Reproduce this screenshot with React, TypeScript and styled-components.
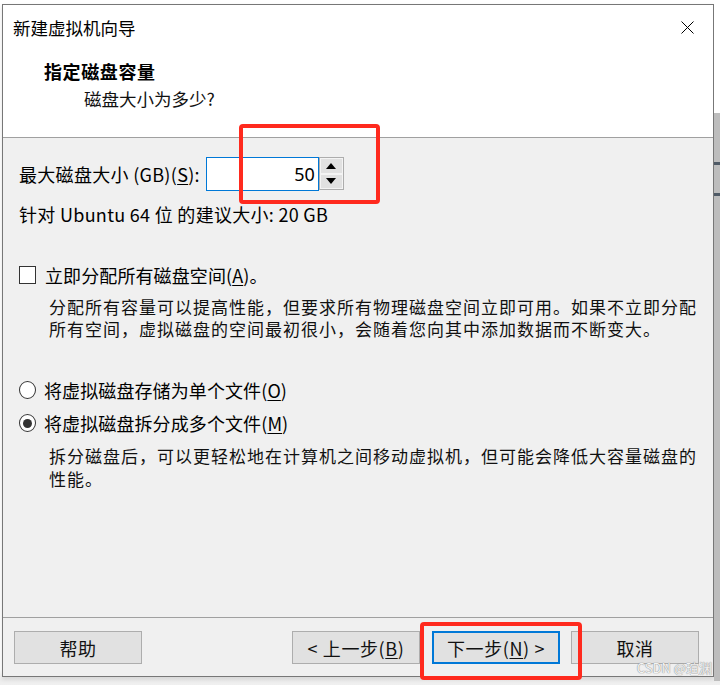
import React from "react";
import styled, { createGlobalStyle } from "styled-components";

const Global = createGlobalStyle`
  html, body { margin: 0; padding: 0; background: #ffffff; }
  body { font-family: "Noto Sans CJK SC", "Noto Sans", sans-serif; color: #000; }
  * { box-sizing: border-box; }
`;

const Page = styled.div`
  position: relative;
  width: 720px;
  height: 685px;
  display: flex;
  align-items: flex-start;
  padding: 4px 0 0 2px;
  background: linear-gradient(to bottom, #ffffff 0, #ffffff 670px, #ececec 680px, #f0f0f0 685px);
  overflow: hidden;
`;

const Dialog = styled.div`
  width: 712px;
  height: 673px;
  border: 1px solid #777777;
  display: flex;
  flex-direction: column;
  background: #f0f0f0;
  box-shadow: 0 2px 4px rgba(0, 0, 0, 0.12);
  font-size: 18px;
`;

const RightStrip = styled.div`
  width: 6px;
  height: 681px;
  margin-top: -4px;
  display: flex;
  flex-direction: column;
`;

const StripWhite = styled.div`
  height: 113px;
  background: #ffffff;
`;

const StripGray = styled.div`
  flex: 1;
  background: #bdbdbd;
  display: flex;
  flex-direction: column;
`;

const StripBar = styled.div<{ $top: number }>`
  height: 3px;
  margin-top: ${(p) => p.$top}px;
  background: #4f5a66;
`;

const TitleBar = styled.div`
  height: 44px;
  background: #ffffff;
  display: flex;
  align-items: center;
  justify-content: space-between;
  padding: 0 19px 0 10px;
  font-size: 17.5px;
`;

const CloseIcon = styled.svg`
  width: 13px;
  height: 13px;
`;

const Header = styled.div`
  height: 88px;
  background: #ffffff;
  padding: 10px 0 0 41px;
  display: flex;
  flex-direction: column;
`;

const HeaderTitle = styled.div`
  font-size: 18px;
  line-height: 24px;
  font-weight: 700;
  letter-spacing: 0.6px;
`;

const HeaderSub = styled.div`
  font-size: 17.5px;
  line-height: 24px;
  margin: 4px 0 0 40px;
  color: #111;
`;

const Separator = styled.div`
  height: 1px;
  background: #a0a0a0;
`;

const Body = styled.div`
  flex: 1;
  padding: 19px 16px 0 16px;
  display: flex;
  flex-direction: column;
`;

const SizeRow = styled.div`
  display: flex;
  align-items: center;
  height: 34px;
`;

const Label = styled.span`
  font-size: 18px;
  line-height: 24px;
  letter-spacing: 0.3px;
  margin-right: 6px;
`;

const U = styled.span`
  text-decoration: underline;
  text-underline-offset: 2px;
`;

const Spin = styled.div`
  display: flex;
  height: 34px;
`;

const SpinInput = styled.div`
  width: 113px;
  height: 34px;
  border: 1px solid #0078d7;
  background: #ffffff;
  display: flex;
  align-items: center;
  justify-content: flex-end;
  padding-right: 3px;
  font-size: 18px;
  font-family: "Noto Sans", sans-serif;
`;

const SpinButtons = styled.div`
  width: 25px;
  height: 33px;
  display: flex;
  flex-direction: column;
  border: 1px solid #adadad;
  background: #ffffff;
`;

const SpinBtn = styled.div`
  flex: 1;
  background: #e1e1e1;
  border: 1px solid #f4f4f4;
  display: flex;
  align-items: center;
  justify-content: center;
`;

const Arrow = styled.svg`
  width: 10px;
  height: 6px;
`;

const InfoLine = styled.div`
  margin-top: 11px;
  font-size: 18px;
  line-height: 24px;
  letter-spacing: 0.3px;
`;

const OptionRow = styled.div<{ $mt: number }>`
  display: flex;
  align-items: center;
  height: 24px;
  margin-top: ${(p) => p.$mt}px;
  font-size: 18px;
  letter-spacing: 0.1px;
`;

const CheckBox = styled.div`
  width: 17px;
  height: 18px;
  border: 1px solid #333333;
  background: #ffffff;
  margin-right: 9px;
`;

const Radio = styled.div<{ $on?: boolean }>`
  width: 17px;
  height: 18px;
  border-radius: 50%;
  border: 1px solid #333333;
  background: #ffffff;
  margin-right: 8px;
  display: flex;
  align-items: center;
  justify-content: center;
  &::after {
    content: "";
    display: ${(p) => (p.$on ? "block" : "none")};
    width: 9px;
    height: 9px;
    border-radius: 50%;
    background: #333333;
  }
`;

const Desc = styled.div<{ $lh: number }>`
  margin: 9px 0 0 30px;
  font-size: 17px;
  line-height: ${(p) => p.$lh}px;
  letter-spacing: 1px;
  color: #111;
`;

const Footer = styled.div`
  height: 58px;
  display: flex;
  align-items: flex-start;
  padding: 13px 13px 0 11px;
`;

const Button = styled.div<{ $primary?: boolean; $ml?: number }>`
  width: 128px;
  height: 33px;
  margin-left: ${(p) => p.$ml ?? 0}px;
  background: #e1e1e1;
  border: ${(p) => (p.$primary ? "2px solid #0078d7" : "1px solid #adadad")};
  display: flex;
  align-items: center;
  justify-content: center;
  font-size: 18px;
  letter-spacing: 0.6px;
  color: #111;
`;

const RedBox = styled.div<{ $x: number; $y: number; $w: number; $h: number }>`
  position: absolute;
  left: ${(p) => p.$x}px;
  top: ${(p) => p.$y}px;
  width: ${(p) => p.$w}px;
  height: ${(p) => p.$h}px;
  border: 4px solid #ff2a1e;
  border-radius: 4px;
  pointer-events: none;
`;

const Watermark = styled.div`
  position: absolute;
  right: 8px;
  bottom: 8px;
  font-size: 13px;
  color: rgba(255, 255, 255, 0.92);
  text-shadow: 0 0 1px #8a8a8a, 0 0 1px #8a8a8a;
  font-family: "Noto Sans CJK SC", sans-serif;
`;

export default function App() {
  return (
    <>
      <Global />
      <Page>
        <Dialog>
          <TitleBar>
            <span>新建虚拟机向导</span>
            <CloseIcon viewBox="0 0 13 13">
              <path d="M0.5 0.5 L12.5 12.5 M12.5 0.5 L0.5 12.5" stroke="#000" strokeWidth="1" fill="none" />
            </CloseIcon>
          </TitleBar>
          <Header>
            <HeaderTitle>指定磁盘容量</HeaderTitle>
            <HeaderSub>磁盘大小为多少?</HeaderSub>
          </Header>
          <Separator />
          <Body>
            <SizeRow>
              <Label>
                最大磁盘大小 (GB)(<U>S</U>):
              </Label>
              <Spin>
                <SpinInput>50</SpinInput>
                <SpinButtons>
                  <SpinBtn>
                    <Arrow viewBox="0 0 10 6">
                      <path d="M5 0 L10 6 L0 6 Z" fill="#000" />
                    </Arrow>
                  </SpinBtn>
                  <SpinBtn>
                    <Arrow viewBox="0 0 10 6">
                      <path d="M0 0 L10 0 L5 6 Z" fill="#000" />
                    </Arrow>
                  </SpinBtn>
                </SpinButtons>
              </Spin>
            </SizeRow>
            <InfoLine>针对 Ubuntu 64 位 的建议大小: 20 GB</InfoLine>
            <OptionRow $mt={37}>
              <CheckBox />
              <span>
                立即分配所有磁盘空间(<U>A</U>)。
              </span>
            </OptionRow>
            <Desc $lh={22}>
              分配所有容量可以提高性能，但要求所有物理磁盘空间立即可用。如果不立即分配
              <br />
              所有空间，虚拟磁盘的空间最初很小，会随着您向其中添加数据而不断变大。
            </Desc>
            <OptionRow $mt={38}>
              <Radio />
              <span>
                将虚拟磁盘存储为单个文件(<U>O</U>)
              </span>
            </OptionRow>
            <OptionRow $mt={9}>
              <Radio $on />
              <span>
                将虚拟磁盘拆分成多个文件(<U>M</U>)
              </span>
            </OptionRow>
            <Desc $lh={23}>
              拆分磁盘后，可以更轻松地在计算机之间移动虚拟机，但可能会降低大容量磁盘的
              <br />
              性能。
            </Desc>
          </Body>
          <Separator />
          <Footer>
            <Button>帮助</Button>
            <Button $ml={150}>
              &lt; 上一步(<U>B</U>)
            </Button>
            <Button $primary $ml={12}>
              下一步(<U>N</U>) &gt;
            </Button>
            <Button $ml={11}>取消</Button>
          </Footer>
        </Dialog>
        <RightStrip>
          <StripWhite />
          <StripGray>
            <StripBar $top={49} />
            <StripBar $top={28} />
          </StripGray>
        </RightStrip>
        <RedBox $x={239} $y={124} $w={141} $h={80} />
        <RedBox $x={420} $y={622} $w={162} $h={58} />
        <Watermark>CSDN @瑄渊</Watermark>
      </Page>
    </>
  );
}
